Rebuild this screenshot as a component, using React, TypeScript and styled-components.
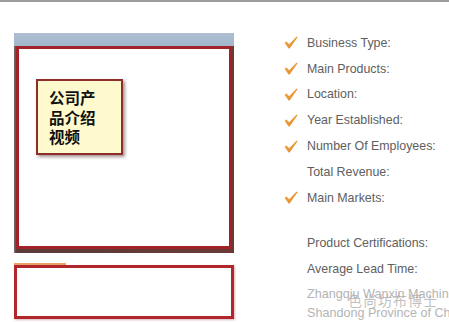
import React from "react";
import styled, { createGlobalStyle } from "styled-components";

const Global = createGlobalStyle`
  html, body { margin: 0; padding: 0; background: #ffffff; }
  body { width: 449px; height: 322px; overflow: hidden; font-family: "Liberation Sans", Arial, sans-serif; }
`;

const Page = styled.div`
  position: relative;
  width: 449px;
  height: 322px;
  overflow: hidden;
  background: #fff;
`;

const TopBar = styled.div`
  height: 2px;
  background: #9c9c9c;
`;

const Body = styled.div`
  display: flex;
  align-items: flex-start;
`;

const LeftCol = styled.div`
  display: flex;
  flex-direction: column;
  width: 220px;
  margin-left: 14px;
  margin-top: 31px;
  flex-shrink: 0;
`;

const PhotoFrame = styled.div`
  display: flex;
  flex-direction: column;
  height: 220px;
  padding: 13px 2px 4px 2px;
  box-sizing: border-box;
  background:
    linear-gradient(180deg, #adbfd1 0px, #a3b7cb 13px, transparent 13px),
    linear-gradient(90deg, #7a6a68 0px, #5a3c3a 3px, #6a3a36 100%);
`;

const RedBox = styled.div`
  flex: 1;
  border: 3px solid #a2222a;
  background: #ffffff;
  padding: 30px 0 0 17px;
  box-sizing: border-box;
`;

const Note = styled.div`
  width: 87px;
  height: 76px;
  box-sizing: border-box;
  border: 2px solid #8c2e2c;
  background: #fffacd;
  box-shadow: 2px 2px 3px rgba(60, 20, 20, 0.45);
  padding: 7px 0 0 11px;
  font-family: "Noto Sans CJK SC", "Liberation Sans", sans-serif;
  font-weight: 700;
  font-size: 15.5px;
  line-height: 19.5px;
  color: #111;
`;

const SecondBlock = styled.div`
  display: flex;
  flex-direction: column;
  margin-top: 10px;
`;

const OrangeStrip = styled.div`
  width: 52px;
  height: 2px;
  background: #eaa468;
`;

const SecondBox = styled.div`
  height: 54px;
  box-sizing: border-box;
  border: 3px solid #b1262b;
  background: #fff;
  box-shadow: 1px 1px 2px rgba(150, 40, 40, 0.35);
`;

const RightCol = styled.div`
  display: flex;
  flex-direction: column;
  margin-left: 50px;
  margin-top: 28px;
  white-space: nowrap;
`;

const Row = styled.div<{ $gapTop?: number }>`
  display: flex;
  align-items: center;
  height: 25.8px;
  margin-top: ${(p) => p.$gapTop ?? 0}px;
  font-size: 12.4px;
  color: #606060;
`;

const CheckSlot = styled.div`
  width: 14px;
  height: 14px;
  margin-right: 9px;
  display: flex;
  align-items: center;
  justify-content: center;
  flex-shrink: 0;
`;

const FadedLine = styled.div<{ $first?: boolean }>`
  padding-left: 23px;
  height: 19px;
  line-height: 19px;
  margin-top: ${(p) => (p.$first ? 3 : 0)}px;
  font-size: 12.6px;
  color: #b4b4b4;
`;

const Watermark = styled.div`
  position: absolute;
  left: 348px;
  top: 290px;
  font-family: "Noto Sans CJK SC", sans-serif;
  font-size: 14px;
  letter-spacing: 1px;
  color: rgba(170, 170, 170, 0.75);
`;

const Check = () => (
  <svg width="14" height="13" viewBox="0 0 14 13">
    <defs>
      <linearGradient id="cg" x1="0" y1="0" x2="1" y2="1">
        <stop offset="0" stopColor="#f2ae52" />
        <stop offset="1" stopColor="#e08420" />
      </linearGradient>
    </defs>
    <path d="M0.5 6.8 L2.6 5.4 L5.2 8.3 L12.6 0.4 L13.6 1.2 L5.6 12.6 L4.6 12.6 Z" fill="url(#cg)" />
  </svg>
);

type Item = { label: string; check: boolean; gap?: number };

const items: Item[] = [
  { label: "Business Type:", check: true },
  { label: "Main Products:", check: true },
  { label: "Location:", check: true },
  { label: "Year Established:", check: true },
  { label: "Number Of Employees:", check: true },
  { label: "Total Revenue:", check: false },
  { label: "Main Markets:", check: true },
  { label: "Product Certifications:", check: false, gap: 20 },
  { label: "Average Lead Time:", check: false },
];

export default function App() {
  return (
    <Page>
      <Global />
      <TopBar />
      <Body>
        <LeftCol>
          <PhotoFrame>
            <RedBox>
              <Note>
                公司产
                <br />
                品介绍
                <br />
                视频
              </Note>
            </RedBox>
          </PhotoFrame>
          <SecondBlock>
            <OrangeStrip />
            <SecondBox />
          </SecondBlock>
        </LeftCol>
        <RightCol>
          {items.map((it) => (
            <Row key={it.label} $gapTop={it.gap}>
              <CheckSlot>{it.check ? <Check /> : null}</CheckSlot>
              {it.label}
            </Row>
          ))}
          <FadedLine $first>Zhangqiu Wanxin Machine</FadedLine>
          <FadedLine>Shandong Province of China</FadedLine>
        </RightCol>
      </Body>
      <Watermark>色尚坊布博士</Watermark>
    </Page>
  );
}
